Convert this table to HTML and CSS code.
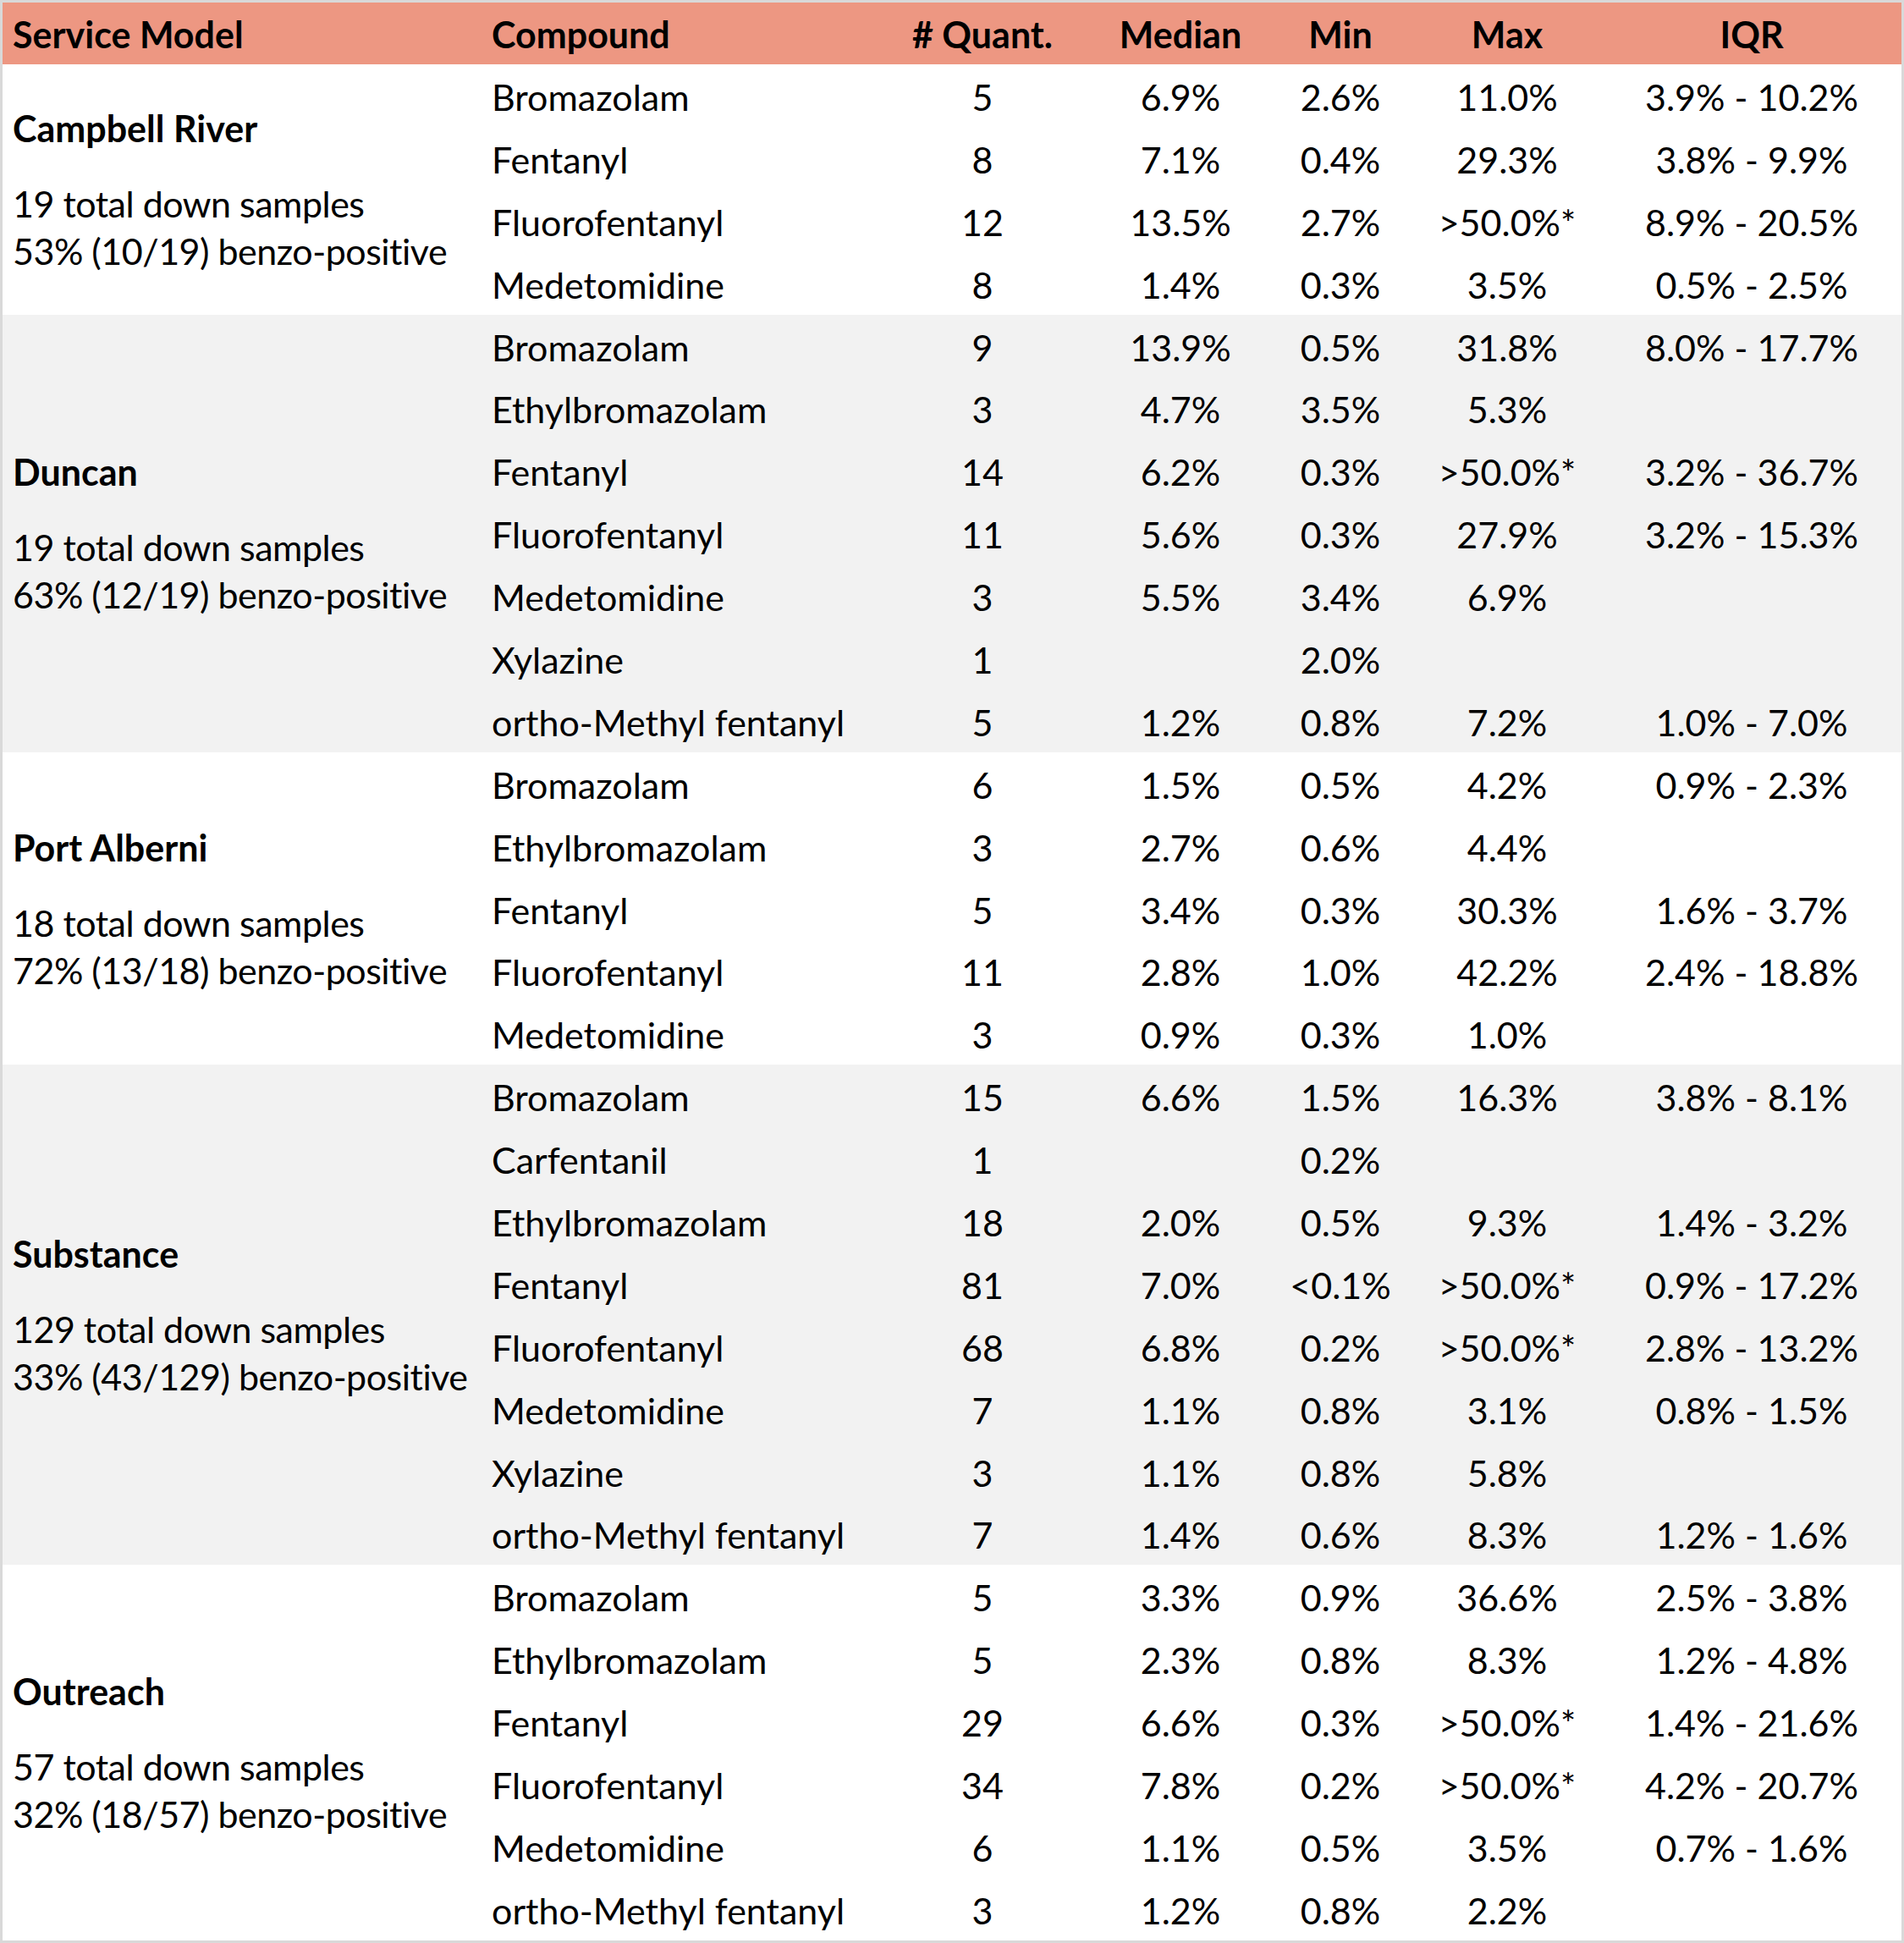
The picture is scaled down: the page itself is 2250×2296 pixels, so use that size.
FILE: index.html
```html
<!DOCTYPE html>
<html lang="en">
<head>
<meta charset="utf-8">
<title>Service Model</title>
<link rel="stylesheet" href="styles.css">
</head>
<body>
<div class="frame">
  <div class="table">
    <div class="head">
      <div class="hc left first">Service Model</div>
      <div class="hc left">Compound</div>
      <div class="hc">#&nbsp;Quant.</div>
      <div class="hc">Median</div>
      <div class="hc">Min</div>
      <div class="hc">Max</div>
      <div class="hc">IQR</div>
    </div>

    <div class="group">
      <div class="label">
        <div class="name">Campbell River</div>
        <div class="desc">19 total down samples<br>53% (10/19) benzo-positive</div>
      </div>
      <div class="rows">
        <div class="row"><span class="cmp">Bromazolam</span><span>5</span><span>6.9%</span><span>2.6%</span><span>11.0%</span><span>3.9% - 10.2%</span></div>
        <div class="row"><span class="cmp">Fentanyl</span><span>8</span><span>7.1%</span><span>0.4%</span><span>29.3%</span><span>3.8% - 9.9%</span></div>
        <div class="row"><span class="cmp">Fluorofentanyl</span><span>12</span><span>13.5%</span><span>2.7%</span><span>&gt;50.0%*</span><span>8.9% - 20.5%</span></div>
        <div class="row"><span class="cmp">Medetomidine</span><span>8</span><span>1.4%</span><span>0.3%</span><span>3.5%</span><span>0.5% - 2.5%</span></div>
      </div>
    </div>

    <div class="group shaded">
      <div class="label">
        <div class="name">Duncan</div>
        <div class="desc">19 total down samples<br>63% (12/19) benzo-positive</div>
      </div>
      <div class="rows">
        <div class="row"><span class="cmp">Bromazolam</span><span>9</span><span>13.9%</span><span>0.5%</span><span>31.8%</span><span>8.0% - 17.7%</span></div>
        <div class="row"><span class="cmp">Ethylbromazolam</span><span>3</span><span>4.7%</span><span>3.5%</span><span>5.3%</span><span></span></div>
        <div class="row"><span class="cmp">Fentanyl</span><span>14</span><span>6.2%</span><span>0.3%</span><span>&gt;50.0%*</span><span>3.2% - 36.7%</span></div>
        <div class="row"><span class="cmp">Fluorofentanyl</span><span>11</span><span>5.6%</span><span>0.3%</span><span>27.9%</span><span>3.2% - 15.3%</span></div>
        <div class="row"><span class="cmp">Medetomidine</span><span>3</span><span>5.5%</span><span>3.4%</span><span>6.9%</span><span></span></div>
        <div class="row"><span class="cmp">Xylazine</span><span>1</span><span></span><span>2.0%</span><span></span><span></span></div>
        <div class="row"><span class="cmp">ortho-Methyl fentanyl</span><span>5</span><span>1.2%</span><span>0.8%</span><span>7.2%</span><span>1.0% - 7.0%</span></div>
      </div>
    </div>

    <div class="group">
      <div class="label">
        <div class="name">Port Alberni</div>
        <div class="desc">18 total down samples<br>72% (13/18) benzo-positive</div>
      </div>
      <div class="rows">
        <div class="row"><span class="cmp">Bromazolam</span><span>6</span><span>1.5%</span><span>0.5%</span><span>4.2%</span><span>0.9% - 2.3%</span></div>
        <div class="row"><span class="cmp">Ethylbromazolam</span><span>3</span><span>2.7%</span><span>0.6%</span><span>4.4%</span><span></span></div>
        <div class="row"><span class="cmp">Fentanyl</span><span>5</span><span>3.4%</span><span>0.3%</span><span>30.3%</span><span>1.6% - 3.7%</span></div>
        <div class="row"><span class="cmp">Fluorofentanyl</span><span>11</span><span>2.8%</span><span>1.0%</span><span>42.2%</span><span>2.4% - 18.8%</span></div>
        <div class="row"><span class="cmp">Medetomidine</span><span>3</span><span>0.9%</span><span>0.3%</span><span>1.0%</span><span></span></div>
      </div>
    </div>

    <div class="group shaded">
      <div class="label">
        <div class="name">Substance</div>
        <div class="desc">129 total down samples<br>33% (43/129) benzo-positive</div>
      </div>
      <div class="rows">
        <div class="row"><span class="cmp">Bromazolam</span><span>15</span><span>6.6%</span><span>1.5%</span><span>16.3%</span><span>3.8% - 8.1%</span></div>
        <div class="row"><span class="cmp">Carfentanil</span><span>1</span><span></span><span>0.2%</span><span></span><span></span></div>
        <div class="row"><span class="cmp">Ethylbromazolam</span><span>18</span><span>2.0%</span><span>0.5%</span><span>9.3%</span><span>1.4% - 3.2%</span></div>
        <div class="row"><span class="cmp">Fentanyl</span><span>81</span><span>7.0%</span><span>&lt;0.1%</span><span>&gt;50.0%*</span><span>0.9% - 17.2%</span></div>
        <div class="row"><span class="cmp">Fluorofentanyl</span><span>68</span><span>6.8%</span><span>0.2%</span><span>&gt;50.0%*</span><span>2.8% - 13.2%</span></div>
        <div class="row"><span class="cmp">Medetomidine</span><span>7</span><span>1.1%</span><span>0.8%</span><span>3.1%</span><span>0.8% - 1.5%</span></div>
        <div class="row"><span class="cmp">Xylazine</span><span>3</span><span>1.1%</span><span>0.8%</span><span>5.8%</span><span></span></div>
        <div class="row"><span class="cmp">ortho-Methyl fentanyl</span><span>7</span><span>1.4%</span><span>0.6%</span><span>8.3%</span><span>1.2% - 1.6%</span></div>
      </div>
    </div>

    <div class="group">
      <div class="label">
        <div class="name">Outreach</div>
        <div class="desc">57 total down samples<br>32% (18/57) benzo-positive</div>
      </div>
      <div class="rows">
        <div class="row"><span class="cmp">Bromazolam</span><span>5</span><span>3.3%</span><span>0.9%</span><span>36.6%</span><span>2.5% - 3.8%</span></div>
        <div class="row"><span class="cmp">Ethylbromazolam</span><span>5</span><span>2.3%</span><span>0.8%</span><span>8.3%</span><span>1.2% - 4.8%</span></div>
        <div class="row"><span class="cmp">Fentanyl</span><span>29</span><span>6.6%</span><span>0.3%</span><span>&gt;50.0%*</span><span>1.4% - 21.6%</span></div>
        <div class="row"><span class="cmp">Fluorofentanyl</span><span>34</span><span>7.8%</span><span>0.2%</span><span>&gt;50.0%*</span><span>4.2% - 20.7%</span></div>
        <div class="row"><span class="cmp">Medetomidine</span><span>6</span><span>1.1%</span><span>0.5%</span><span>3.5%</span><span>0.7% - 1.6%</span></div>
        <div class="row"><span class="cmp">ortho-Methyl fentanyl</span><span>3</span><span>1.2%</span><span>0.8%</span><span>2.2%</span><span></span></div>
      </div>
    </div>
  </div>
</div>
</body>
</html>
```

FILE: styles.css
```css
html, body {
  margin: 0;
  padding: 0;
  background: #d9d9d9;
}

.frame {
  padding: 3px;
  width: 2244px;
  height: 2290px;
}

.table {
  background: #ffffff;
  color: #000000;
  font-family: Lato, "Liberation Sans", sans-serif;
  font-size: 43px;
  letter-spacing: 0;
}

.head {
  display: grid;
  grid-template-columns: 563px 465px 260px 208px 170px 224px 354px;
  height: 73px;
  background: #ed9782;
  align-items: center;
  padding-top: 1px;
  box-sizing: border-box;
}

.hc {
  font-weight: 700;
  text-align: center;
}

.hc.left {
  text-align: left;
  padding-left: 15px;
}

.hc.first {
  padding-left: 12px;
}

.group {
  display: flex;
  background: #ffffff;
}

.group.shaded {
  background: #f2f2f2;
}

.label {
  width: 563px;
  flex: none;
  display: flex;
  flex-direction: column;
  justify-content: center;
  padding-left: 12px;
  padding-top: 1px;
  box-sizing: border-box;
  white-space: nowrap;
}

.name {
  font-weight: 700;
  line-height: 56px;
  margin-bottom: 33px;
}

.desc {
  line-height: 56px;
  letter-spacing: -0.5px;
}

.rows {
  flex: 1;
  display: flex;
  flex-direction: column;
}

.row {
  display: grid;
  grid-template-columns: 465px 260px 208px 170px 224px 354px;
  height: 73.9px;
  align-items: center;
  padding-top: 3px;
  box-sizing: border-box;
  white-space: nowrap;
}

.row span {
  text-align: center;
}

.row .cmp {
  text-align: left;
  padding-left: 15px;
}
```
